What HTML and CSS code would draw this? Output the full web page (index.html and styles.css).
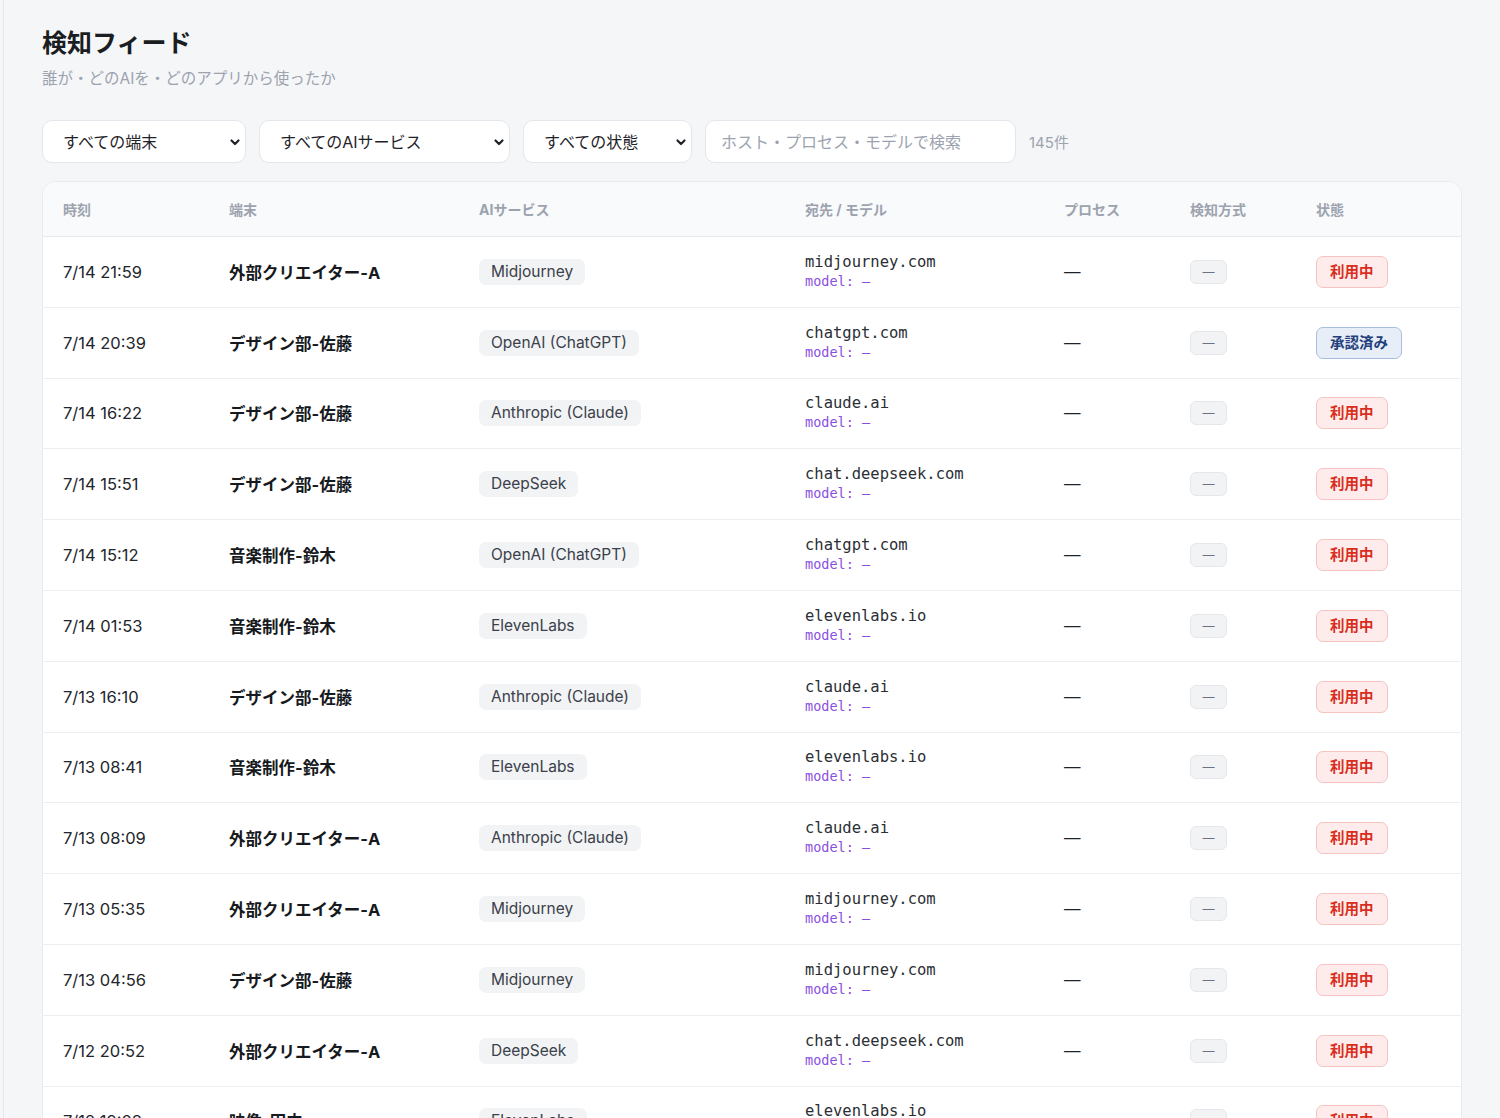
FILE: index.html
```html
<!DOCTYPE html>
<html lang="ja">
<head>
    <meta charset="UTF-8">
    <meta name="viewport" content="width=device-width, initial-scale=1.0">
    <title>検知フィード</title>
    <link rel="stylesheet" href="styles.css">
</head>
<body>
    <main class="page">
        <h1 class="title">検知フィード</h1>
        <p class="subtitle">誰が・どのAIを・どのアプリから使ったか</p>

        <div class="filters">
            <div class="select-wrap w-device">
                <select class="select">
                    <option>すべての端末</option>
                </select>
                <svg class="chevron" viewBox="0 0 12 12" width="12" height="12"><path d="M2.5 4.5 L6 8 L9.5 4.5" fill="none" stroke="#1f2328" stroke-width="2.2" stroke-linecap="round" stroke-linejoin="round"/></svg>
            </div>
            <div class="select-wrap w-service">
                <select class="select">
                    <option>すべてのAIサービス</option>
                </select>
                <svg class="chevron" viewBox="0 0 12 12" width="12" height="12"><path d="M2.5 4.5 L6 8 L9.5 4.5" fill="none" stroke="#1f2328" stroke-width="2.2" stroke-linecap="round" stroke-linejoin="round"/></svg>
            </div>
            <div class="select-wrap w-state">
                <select class="select">
                    <option>すべての状態</option>
                </select>
                <svg class="chevron" viewBox="0 0 12 12" width="12" height="12"><path d="M2.5 4.5 L6 8 L9.5 4.5" fill="none" stroke="#1f2328" stroke-width="2.2" stroke-linecap="round" stroke-linejoin="round"/></svg>
            </div>
            <input type="text" class="search" placeholder="ホスト・プロセス・モデルで検索">
            <span class="count">145件</span>
        </div>

        <div class="card">
            <table class="feed">
                <colgroup>
                    <col style="width:166px">
                    <col style="width:250px">
                    <col style="width:326px">
                    <col style="width:259px">
                    <col style="width:126px">
                    <col style="width:126px">
                    <col style="width:167px">
                </colgroup>
                <thead>
                    <tr>
                        <th>時刻</th>
                        <th>端末</th>
                        <th>AIサービス</th>
                        <th>宛先 / モデル</th>
                        <th>プロセス</th>
                        <th>検知方式</th>
                        <th>状態</th>
                    </tr>
                </thead>
                <tbody>
                    <tr>
                        <td class="time">7/14 21:59</td>
                        <td class="device">外部クリエイター-A</td>
                        <td><span class="chip">Midjourney</span></td>
                        <td class="dest"><div class="host">midjourney.com</div><div class="model">model: —</div></td>
                        <td class="proc">—</td>
                        <td><span class="method">—</span></td>
                        <td><span class="status active">利用中</span></td>
                    </tr>
                    <tr>
                        <td class="time">7/14 20:39</td>
                        <td class="device">デザイン部-佐藤</td>
                        <td><span class="chip">OpenAI (ChatGPT)</span></td>
                        <td class="dest"><div class="host">chatgpt.com</div><div class="model">model: —</div></td>
                        <td class="proc">—</td>
                        <td><span class="method">—</span></td>
                        <td><span class="status approved">承認済み</span></td>
                    </tr>
                    <tr>
                        <td class="time">7/14 16:22</td>
                        <td class="device">デザイン部-佐藤</td>
                        <td><span class="chip">Anthropic (Claude)</span></td>
                        <td class="dest"><div class="host">claude.ai</div><div class="model">model: —</div></td>
                        <td class="proc">—</td>
                        <td><span class="method">—</span></td>
                        <td><span class="status active">利用中</span></td>
                    </tr>
                    <tr>
                        <td class="time">7/14 15:51</td>
                        <td class="device">デザイン部-佐藤</td>
                        <td><span class="chip">DeepSeek</span></td>
                        <td class="dest"><div class="host">chat.deepseek.com</div><div class="model">model: —</div></td>
                        <td class="proc">—</td>
                        <td><span class="method">—</span></td>
                        <td><span class="status active">利用中</span></td>
                    </tr>
                    <tr>
                        <td class="time">7/14 15:12</td>
                        <td class="device">音楽制作-鈴木</td>
                        <td><span class="chip">OpenAI (ChatGPT)</span></td>
                        <td class="dest"><div class="host">chatgpt.com</div><div class="model">model: —</div></td>
                        <td class="proc">—</td>
                        <td><span class="method">—</span></td>
                        <td><span class="status active">利用中</span></td>
                    </tr>
                    <tr>
                        <td class="time">7/14 01:53</td>
                        <td class="device">音楽制作-鈴木</td>
                        <td><span class="chip">ElevenLabs</span></td>
                        <td class="dest"><div class="host">elevenlabs.io</div><div class="model">model: —</div></td>
                        <td class="proc">—</td>
                        <td><span class="method">—</span></td>
                        <td><span class="status active">利用中</span></td>
                    </tr>
                    <tr>
                        <td class="time">7/13 16:10</td>
                        <td class="device">デザイン部-佐藤</td>
                        <td><span class="chip">Anthropic (Claude)</span></td>
                        <td class="dest"><div class="host">claude.ai</div><div class="model">model: —</div></td>
                        <td class="proc">—</td>
                        <td><span class="method">—</span></td>
                        <td><span class="status active">利用中</span></td>
                    </tr>
                    <tr>
                        <td class="time">7/13 08:41</td>
                        <td class="device">音楽制作-鈴木</td>
                        <td><span class="chip">ElevenLabs</span></td>
                        <td class="dest"><div class="host">elevenlabs.io</div><div class="model">model: —</div></td>
                        <td class="proc">—</td>
                        <td><span class="method">—</span></td>
                        <td><span class="status active">利用中</span></td>
                    </tr>
                    <tr>
                        <td class="time">7/13 08:09</td>
                        <td class="device">外部クリエイター-A</td>
                        <td><span class="chip">Anthropic (Claude)</span></td>
                        <td class="dest"><div class="host">claude.ai</div><div class="model">model: —</div></td>
                        <td class="proc">—</td>
                        <td><span class="method">—</span></td>
                        <td><span class="status active">利用中</span></td>
                    </tr>
                    <tr>
                        <td class="time">7/13 05:35</td>
                        <td class="device">外部クリエイター-A</td>
                        <td><span class="chip">Midjourney</span></td>
                        <td class="dest"><div class="host">midjourney.com</div><div class="model">model: —</div></td>
                        <td class="proc">—</td>
                        <td><span class="method">—</span></td>
                        <td><span class="status active">利用中</span></td>
                    </tr>
                    <tr>
                        <td class="time">7/13 04:56</td>
                        <td class="device">デザイン部-佐藤</td>
                        <td><span class="chip">Midjourney</span></td>
                        <td class="dest"><div class="host">midjourney.com</div><div class="model">model: —</div></td>
                        <td class="proc">—</td>
                        <td><span class="method">—</span></td>
                        <td><span class="status active">利用中</span></td>
                    </tr>
                    <tr>
                        <td class="time">7/12 20:52</td>
                        <td class="device">外部クリエイター-A</td>
                        <td><span class="chip">DeepSeek</span></td>
                        <td class="dest"><div class="host">chat.deepseek.com</div><div class="model">model: —</div></td>
                        <td class="proc">—</td>
                        <td><span class="method">—</span></td>
                        <td><span class="status active">利用中</span></td>
                    </tr>
                    <tr>
                        <td class="time">7/12 19:08</td>
                        <td class="device">映像-田中</td>
                        <td><span class="chip">ElevenLabs</span></td>
                        <td class="dest"><div class="host">elevenlabs.io</div><div class="model">model: —</div></td>
                        <td class="proc">—</td>
                        <td><span class="method">—</span></td>
                        <td><span class="status active">利用中</span></td>
                    </tr>
                </tbody>
            </table>
        </div>
    </main>
</body>
</html>
```

FILE: styles.css
```css
body {
    margin: 0;
    background-color: #f5f6f8;
    color: #1f2328;
    font-family: Inter, "Noto Sans CJK JP", sans-serif;
}

.page {
    margin-left: 3px;
    border-left: 1px solid #e6e8eb;
    padding: 26px 34px 40px 38px;
    min-height: 1100px;
}

.title {
    margin: 0;
    font-size: 25px;
    line-height: 34px;
    font-weight: 700;
    color: #1a1d21;
}

.subtitle {
    margin: 8px 0 0;
    font-size: 15.5px;
    line-height: 22px;
    color: #9ca3af;
}

/* filter bar */
.filters {
    display: flex;
    align-items: center;
    gap: 13px;
    margin-top: 30px;
}

.select-wrap {
    position: relative;
    height: 43px;
}
.w-device { width: 204px; }
.w-service { width: 251px; }
.w-state { width: 169px; }

.select {
    appearance: none;
    -webkit-appearance: none;
    width: 100%;
    height: 43px;
    padding: 0 30px 0 20px;
    border: 1px solid #e3e6ea;
    border-radius: 10px;
    background-color: #fff;
    font-family: Inter, "Noto Sans CJK JP", sans-serif;
    font-size: 16px;
    color: #1f2328;
}

.chevron {
    position: absolute;
    right: 5px;
    top: 16px;
    pointer-events: none;
}

.search {
    width: 311px;
    height: 43px;
    box-sizing: border-box;
    padding: 0 15px;
    border: 1px solid #e3e6ea;
    border-radius: 10px;
    background-color: #fff;
    font-family: Inter, "Noto Sans CJK JP", sans-serif;
    font-size: 16px;
    color: #1f2328;
}
.search::placeholder {
    color: #9ca3af;
}

.count {
    font-size: 15px;
    color: #9ca3af;
}

/* table card */
.card {
    margin-top: 18px;
    width: 1420px;
    background-color: #fff;
    border: 1px solid #e8eaed;
    border-radius: 14px;
    overflow: hidden;
    box-sizing: border-box;
}

.feed {
    width: 1418px;
    border-collapse: collapse;
    table-layout: fixed;
}

.feed th {
    height: 54px;
    padding: 0 20px;
    text-align: left;
    font-size: 14px;
    font-weight: 700;
    color: #9ca3af;
    background-color: #f9fafb;
    border-bottom: 1px solid #e8eaed;
}

.feed td {
    height: 69.8px;
    padding: 0 20px;
    border-bottom: 1px solid #eceef1;
    vertical-align: middle;
    font-size: 16.5px;
}

.time {
    color: #22262b;
}

.device {
    font-weight: 700;
    color: #16191d;
}

.chip {
    display: inline-block;
    padding: 3px 12px;
    border-radius: 7px;
    background-color: #f1f3f5;
    font-size: 15.5px;
    line-height: 20px;
    color: #3b4049;
}

.dest {
    font-family: "DejaVu Sans Mono", monospace;
}
.host {
    font-size: 15.5px;
    line-height: 19px;
    color: #2b2f35;
}
.model {
    font-size: 13.5px;
    line-height: 19px;
    color: #8b4fe0;
}

.proc {
    color: #1f2328;
}

.method {
    display: inline-block;
    width: 35px;
    height: 22px;
    line-height: 22px;
    text-align: center;
    border: 1px solid #e5e7eb;
    border-radius: 6px;
    background-color: #f1f3f5;
    font-size: 12px;
    color: #6b7280;
}

.status {
    display: inline-block;
    padding: 0 13px;
    height: 30px;
    line-height: 30px;
    border-radius: 7px;
    font-size: 14.5px;
    font-weight: 700;
}
.active {
    background-color: #fdeceb;
    border: 1px solid #f6c3c0;
    color: #d92d20;
}
.approved {
    background-color: #e8eef8;
    border: 1px solid #a9bde0;
    color: #24407c;
}
```
